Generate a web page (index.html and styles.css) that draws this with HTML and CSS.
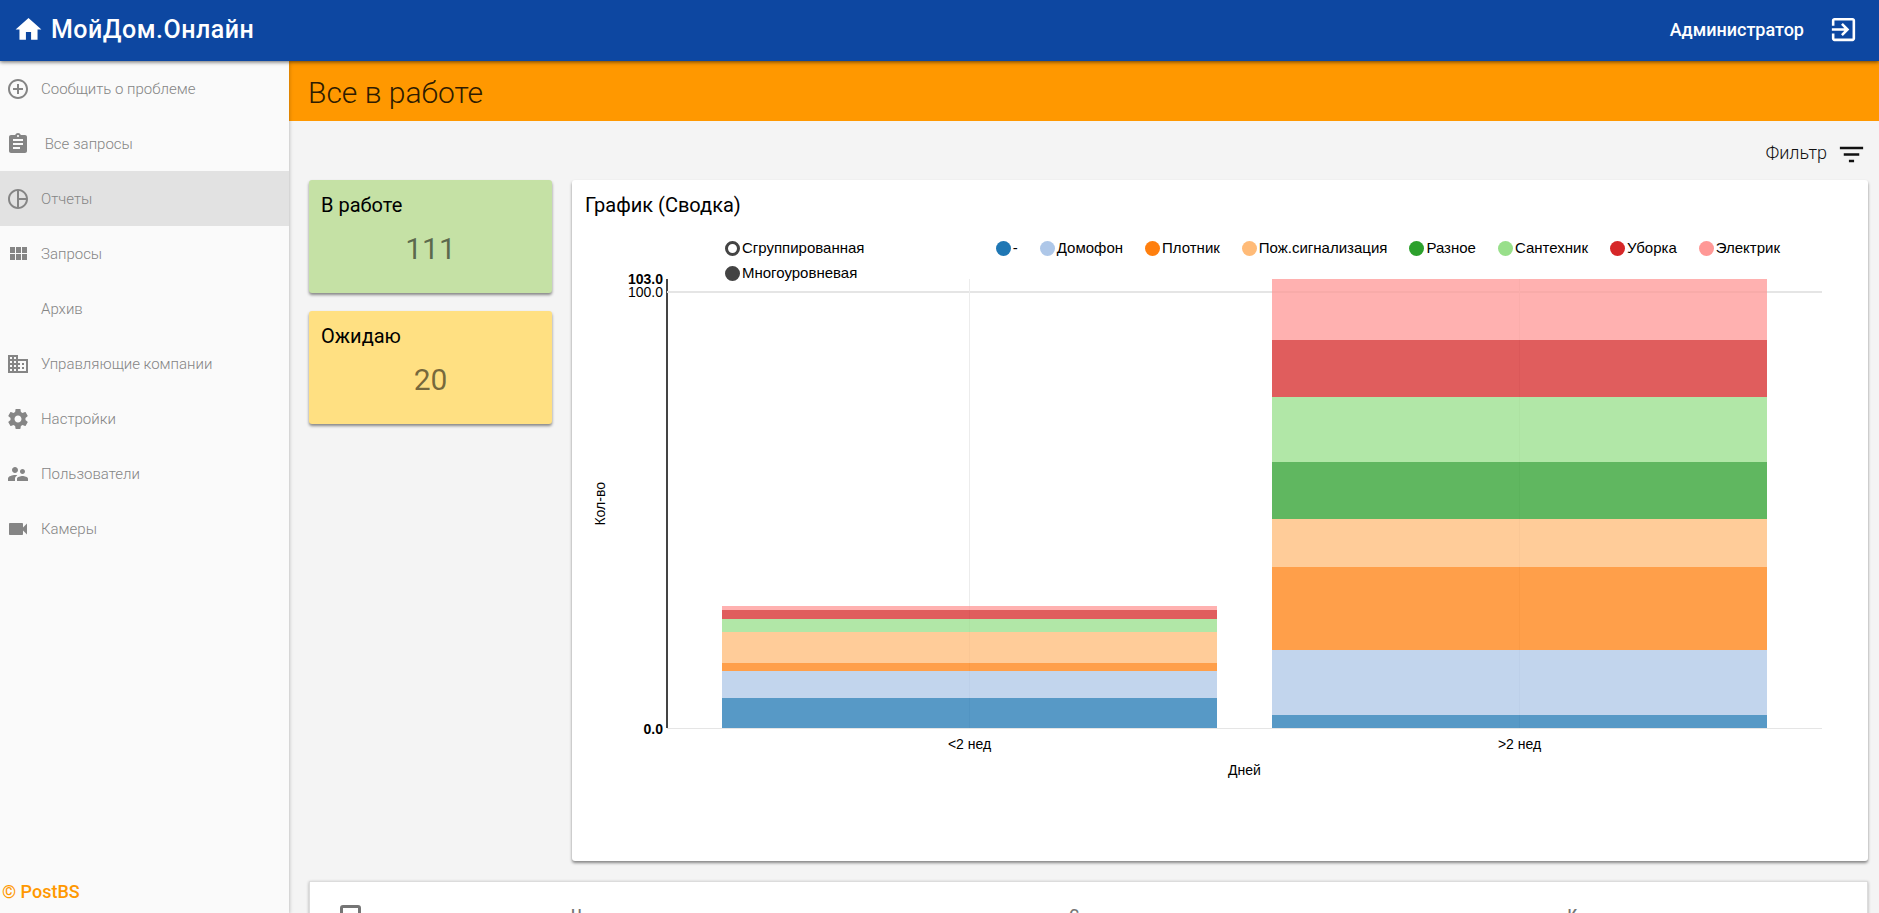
FILE: index.html
```html
<!DOCTYPE html>
<html lang="ru">
<head>
<meta charset="utf-8">
<title>МойДом.Онлайн</title>
<link rel="stylesheet" href="styles.css">
</head>
<body>
<header class="topbar">
  <a class="brand" href="#">
    <svg class="icon-lg" viewBox="0 0 24 24"><path d="M10 20v-6h4v6h5v-8h3L12 3 2 12h3v8z"/></svg>
    <span>МойДом.Онлайн</span>
  </a>
  <div class="account">
    <span>Администратор</span>
    <button class="icon-button" type="button" aria-label="Выйти">
      <svg class="icon-lg" viewBox="0 0 24 24"><path d="M10.09 15.59L11.5 17l5-5-5-5-1.41 1.41L12.67 11H3v2h9.67l-2.58 2.59zM19 3H5c-1.11 0-2 .9-2 2v4h2V5h14v14H5v-4H3v4c0 1.1.89 2 2 2h14c1.1 0 2-.9 2-2V5c0-1.1-.9-2-2-2z"/></svg>
    </button>
  </div>
</header>
<div class="layout">
  <nav class="sidebar">
    <ul class="menu">
      <li><a class="menu-item" href="#"><svg class="icon" viewBox="0 0 24 24"><path d="M13 7h-2v4H7v2h4v4h2v-4h4v-2h-4V7zm-1-5C6.48 2 2 6.48 2 12s4.48 10 10 10 10-4.48 10-10S17.52 2 12 2zm0 18c-4.41 0-8-3.59-8-8s3.59-8 8-8 8 3.59 8 8-3.59 8-8 8z"/></svg><span>Сообщить о проблеме</span></a></li>
      <li><a class="menu-item" href="#"><svg class="icon" viewBox="0 0 24 24"><path d="M19 3h-4.18C14.4 1.84 13.3 1 12 1c-1.3 0-2.4.84-2.82 2H5c-1.1 0-2 .9-2 2v14c0 1.1.9 2 2 2h14c1.1 0 2-.9 2-2V5c0-1.1-.9-2-2-2zm-7 0c.55 0 1 .45 1 1s-.45 1-1 1-1-.45-1-1 .45-1 1-1zm2 14H7v-2h7v2zm3-4H7v-2h10v2zm0-4H7V7h10v2z"/></svg><span>&nbsp;Все запросы</span></a></li>
      <li><a class="menu-item menu-item-active" href="#"><svg class="icon" viewBox="0 0 24 24"><path d="M12 2C6.48 2 2 6.48 2 12s4.48 10 10 10 10-4.48 10-10S17.52 2 12 2zm1 2.07c3.61.45 6.48 3.33 6.93 6.93H13V4.07zM4 12c0-4.06 3.07-7.44 7-7.93v15.87c-3.93-.5-7-3.88-7-7.94zm9 7.93V13h6.93c-.45 3.61-3.32 6.48-6.93 6.93z"/></svg><span>Отчеты</span></a></li>
      <li><a class="menu-item" href="#"><svg class="icon" viewBox="0 0 24 24"><path d="M4 11h5V5H4v6zm0 7h5v-6H4v6zm6 0h5v-6h-5v6zm6 0h5v-6h-5v6zm-6-7h5V5h-5v6zm6-6v6h5V5h-5z"/></svg><span>Запросы</span></a></li>
      <li><a class="menu-item" href="#"><span class="icon"></span><span>Архив</span></a></li>
      <li><a class="menu-item" href="#"><svg class="icon" viewBox="0 0 24 24"><path d="M12 7V3H2v18h20V7H12zM6 19H4v-2h2v2zm0-4H4v-2h2v2zm0-4H4V9h2v2zm0-4H4V5h2v2zm4 12H8v-2h2v2zm0-4H8v-2h2v2zm0-4H8V9h2v2zm0-4H8V5h2v2zm10 12h-8v-2h2v-2h-2v-2h2v-2h-2V9h8v10zm-2-8h-2v2h2v-2zm0 4h-2v2h2v-2z"/></svg><span>Управляющие компании</span></a></li>
      <li><a class="menu-item" href="#"><svg class="icon" viewBox="0 0 24 24"><path d="M19.43 12.98c.04-.32.07-.64.07-.98s-.03-.66-.07-.98l2.11-1.65c.19-.15.24-.42.12-.64l-2-3.46c-.12-.22-.39-.3-.61-.22l-2.49 1c-.52-.4-1.08-.73-1.69-.98l-.38-2.65C14.46 2.18 14.25 2 14 2h-4c-.25 0-.46.18-.49.42l-.38 2.65c-.61.25-1.17.59-1.69.98l-2.49-1c-.23-.09-.49 0-.61.22l-2 3.46c-.13.22-.07.49.12.64l2.11 1.65c-.04.32-.07.65-.07.98s.03.66.07.98l-2.11 1.65c-.19.15-.24.42-.12.64l2 3.46c.12.22.39.3.61.22l2.49-1c.52.4 1.08.73 1.69.98l.38 2.65c.03.24.24.42.49.42h4c.25 0 .46-.18.49-.42l.38-2.65c.61-.25 1.17-.59 1.69-.98l2.49 1c.23.09.49 0 .61-.22l2-3.46c.12-.22.07-.49-.12-.64l-2.11-1.65zM12 15.5c-1.93 0-3.5-1.57-3.5-3.5s1.57-3.5 3.5-3.5 3.5 1.57 3.5 3.5-1.57 3.5-3.5 3.5z"/></svg><span>Настройки</span></a></li>
      <li><a class="menu-item" href="#"><svg class="icon" viewBox="0 0 24 24"><path d="M16.5 12c1.38 0 2.49-1.12 2.49-2.5S17.88 7 16.5 7C15.12 7 14 8.12 14 9.5s1.12 2.5 2.5 2.5zM9 11c1.66 0 2.99-1.34 2.99-3S10.66 5 9 5C7.34 5 6 6.34 6 8s1.34 3 3 3zm7.5 3c-1.83 0-5.5.92-5.5 2.75V19h11v-2.25c0-1.83-3.67-2.75-5.5-2.75zM9 13c-2.33 0-7 1.17-7 3.5V19h7v-2.25c0-.85.33-2.34 2.37-3.47C10.5 13.1 9.66 13 9 13z"/></svg><span>Пользователи</span></a></li>
      <li><a class="menu-item" href="#"><svg class="icon" viewBox="0 0 24 24"><path d="M17 10.5V7c0-.55-.45-1-1-1H4c-.55 0-1 .45-1 1v10c0 .55.45 1 1 1h12c.55 0 1-.45 1-1v-3.5l4 4v-11l-4 4z"/></svg><span>Камеры</span></a></li>
    </ul>
    <a class="copyright" href="#">© PostBS</a>
  </nav>
  <main class="content">
    <h1 class="page-title">Все в работе</h1>
    <div class="filter-bar">
      <button class="filter-button" type="button">
        <span>Фильтр</span>
        <svg class="icon-lg" viewBox="0 0 24 24"><path d="M10 18h4v-2h-4v2zM3 6v2h18V6H3zm3 7h12v-2H6v2z"/></svg>
      </button>
    </div>
    <div class="dashboard">
      <div class="counters">
        <section class="card counter counter-green">
          <h2 class="card-title">В работе</h2>
          <p class="counter-value">111</p>
        </section>
        <section class="card counter counter-yellow">
          <h2 class="card-title">Ожидаю</h2>
          <p class="counter-value">20</p>
        </section>
      </div>
      <section class="card chart-card">
        <h2 class="card-title">График (Сводка)</h2>
        <div class="chart">
          <div class="chart-head">
            <div class="modes">
              <label class="key"><input class="mode" type="radio" name="mode">Сгруппированная</label>
              <label class="key"><input class="mode" type="radio" name="mode" checked>Многоуровневая</label>
            </div>
            <ul class="legend">
              <li class="key"><i class="dot c1"></i>-</li>
              <li class="key"><i class="dot c2"></i>Домофон</li>
              <li class="key"><i class="dot c3"></i>Плотник</li>
              <li class="key"><i class="dot c4"></i>Пож.сигнализация</li>
              <li class="key"><i class="dot c5"></i>Разное</li>
              <li class="key"><i class="dot c6"></i>Сантехник</li>
              <li class="key"><i class="dot c7"></i>Уборка</li>
              <li class="key"><i class="dot c8"></i>Электрик</li>
            </ul>
          </div>
          <div class="y-title"><span>Кол-во</span></div>
          <div class="y-axis">
            <b class="tick tick-max">103.0</b>
            <span class="tick tick-100">100.0</span>
            <b class="tick tick-min">0.0</b>
          </div>
          <div class="plot">
            <div class="gridline"></div>
            <div class="band">
              <div class="stack">
                <i class="c8" style="height:calc(100% * 1 / 103)"></i>
                <i class="c7" style="height:calc(100% * 2 / 103)"></i>
                <i class="c6" style="height:calc(100% * 3 / 103)"></i>
                <i class="c4" style="height:calc(100% * 7 / 103)"></i>
                <i class="c3" style="height:calc(100% * 2 / 103)"></i>
                <i class="c2" style="height:calc(100% * 6 / 103)"></i>
                <i class="c1" style="height:calc(100% * 7 / 103)"></i>
              </div>
            </div>
            <div class="band">
              <div class="stack">
                <i class="c8" style="height:calc(100% * 14 / 103)"></i>
                <i class="c7" style="height:calc(100% * 13 / 103)"></i>
                <i class="c6" style="height:calc(100% * 15 / 103)"></i>
                <i class="c5" style="height:calc(100% * 13 / 103)"></i>
                <i class="c4" style="height:calc(100% * 11 / 103)"></i>
                <i class="c3" style="height:calc(100% * 19 / 103)"></i>
                <i class="c2" style="height:calc(100% * 15 / 103)"></i>
                <i class="c1" style="height:calc(100% * 3 / 103)"></i>
              </div>
            </div>
          </div>
          <div class="x-axis"><span>&lt;2 нед</span><span>&gt;2 нед</span></div>
          <div class="x-title">Дней</div>
        </div>
      </section>
    </div>
    <section class="table-card">
      <table class="requests">
        <thead>
          <tr>
            <th class="check-cell"><input class="check" type="checkbox" aria-label="Выбрать все"></th>
            <th class="wide-cell">Н</th>
            <th class="wide-cell">С</th>
            <th>К</th>
          </tr>
        </thead>
      </table>
    </section>
  </main>
</div>
</body>
</html>
```
FILE: styles.css
```css
* { box-sizing: border-box; }

body {
  margin: 0;
  height: 100vh;
  display: flex;
  flex-direction: column;
  overflow: hidden;
  background: #f4f4f4;
  color: #000;
  font-family: Roboto, "Liberation Sans", sans-serif;
}

ul, p, h1, h2 { margin: 0; padding: 0; list-style: none; }
a { color: inherit; text-decoration: none; }
svg { display: block; fill: currentColor; }
button { padding: 0; border: 0; background: none; color: inherit; font: inherit; cursor: pointer; }

.icon { flex: none; width: 24px; height: 24px; }
.icon-lg { flex: none; width: 31px; height: 31px; }

.topbar {
  position: relative;
  z-index: 2;
  flex: none;
  display: flex;
  align-items: center;
  justify-content: space-between;
  height: 61px;
  padding: 0 20px 3px 13px;
  background: #0d47a1;
  color: #fff;
  box-shadow: 0 1px 4px rgba(0, 0, 0, .6);
}
.brand { display: flex; align-items: center; gap: 7px; font-size: 25px; font-weight: 500; line-height: 31px; letter-spacing: .5px; }
.account { display: flex; align-items: center; gap: 24px; font-size: 18px; font-weight: 500; }

.layout { flex: 1; min-height: 0; display: flex; }

.sidebar {
  position: relative;
  z-index: 1;
  flex: none;
  width: 289px;
  display: flex;
  flex-direction: column;
  justify-content: space-between;
  background: #fafafa;
  box-shadow: 0 1px 4px rgba(0, 0, 0, .3);
}
.menu-item {
  display: flex;
  align-items: center;
  gap: 11px;
  height: 55px;
  padding-left: 6px;
  color: #858585;
  font-size: 15px;
  font-weight: 300;
}
.menu-item-active { background: #e2e2e2; }
.copyright { padding: 0 2px 11px; color: #ff9800; font-size: 18px; font-weight: 500; line-height: 21px; }

.content { flex: 1; min-width: 0; overflow: hidden; }
.page-title {
  height: 60px;
  padding-left: 19px;
  background: #ff9800;
  color: #2e1b00;
  font-size: 30px;
  font-weight: 300;
  line-height: 64px;
}
.filter-bar { display: flex; justify-content: flex-end; align-items: flex-end; height: 59px; padding: 0 12px 10px; }
.filter-button { display: flex; align-items: flex-start; gap: 9px; font-size: 18px; font-weight: 300; line-height: 27px; color: #111; }

.dashboard { display: flex; gap: 20px; padding: 0 11px 0 20px; }
.counters { flex: none; width: 243px; display: flex; flex-direction: column; gap: 18px; }
.card { border-radius: 3px; box-shadow: 0 2px 3px rgba(0, 0, 0, .45); }
.card-title { font-size: 20px; font-weight: 400; line-height: 24px; }
.counter { height: 113px; padding: 13px 12px; }
.counter-green { background: #c5e1a5; }
.counter-yellow { background: #ffe082; }
.counter-value { padding-top: 12px; text-align: center; color: rgba(0, 0, 0, .54); font-size: 30px; line-height: 40px; }

.chart-card { flex: 1; min-width: 0; height: 681px; padding: 13px 46px 0 13px; background: #fff; }

.chart {
  display: grid;
  grid-template-columns: 30px 52px 1fr;
  grid-template-rows: 62px 450px 30px 22px;
  font-family: "Liberation Sans", Arial, sans-serif;
  font-size: 14px;
  line-height: 16px;
}
.chart-head {
  grid-column: 3;
  display: flex;
  align-items: flex-start;
  justify-content: space-between;
  padding: 23px 42px 0 58px;
  font-size: 15px;
}
.modes { display: grid; gap: 9px; }
.legend { display: flex; gap: 22px; }
.key { display: flex; align-items: center; gap: 2px; white-space: nowrap; }
.dot { width: 15px; height: 15px; border-radius: 50%; }
.mode { appearance: none; margin: 0; width: 15px; height: 15px; border: 3px solid #444; border-radius: 50%; }
.mode:checked { background: #444; }

.y-title { grid-area: 2 / 1; display: flex; align-items: center; justify-content: center; }
.y-title span { writing-mode: vertical-rl; transform: rotate(180deg); }
.y-axis { grid-area: 2 / 2; position: relative; }
.tick { position: absolute; right: 4px; transform: translateY(-50%); }
.tick-max { top: 0; }
.tick-100 { top: calc(100% * 3 / 103); }
.tick-min { top: 100%; }

.plot {
  grid-area: 2 / 3;
  position: relative;
  display: flex;
  padding: 0 calc(100% / 42);
  border-bottom: 1px solid #e5e5e5;
}
.plot::before { content: ""; position: absolute; left: -1px; top: 0; width: 2px; height: 100%; background: #444; }
.gridline { position: absolute; left: 0; right: 0; top: calc(100% * 3 / 103 - 1px); height: 2px; background: #e5e5e5; }
.band {
  position: relative;
  flex: 1;
  display: flex;
  align-items: flex-end;
  padding: 0 calc(100% / 40);
  background: linear-gradient(#ececec, #ececec) center / 1px 100% no-repeat;
}
.stack { flex: 1; height: 100%; display: flex; flex-direction: column; justify-content: flex-end; opacity: .75; }

.x-axis { grid-area: 3 / 3; display: flex; padding: 7px calc(100% / 42) 0; text-align: center; }
.x-axis span { flex: 1; }
.x-title { grid-area: 4 / 3; padding-top: 3px; text-align: center; }

.c1 { background: #1f77b4; }
.c2 { background: #aec7e8; }
.c3 { background: #ff7f0e; }
.c4 { background: #ffbb78; }
.c5 { background: #2ca02c; }
.c6 { background: #98df8a; }
.c7 { background: #d62728; }
.c8 { background: #ff9896; }

.table-card { margin: 20px 11px 0 20px; background: #fff; border: 1px solid #dcdcdc; box-shadow: 0 1px 3px rgba(0, 0, 0, .3); }
.requests { width: 100%; border-collapse: collapse; table-layout: fixed; }
.requests th { height: 66px; padding: 0; text-align: left; color: #757575; font-size: 15px; font-weight: 500; }
.requests .check-cell { width: 261px; padding-left: 30px; }
.requests .wide-cell { width: 32%; }
.check { appearance: none; display: block; margin: 0; width: 21px; height: 21px; border: 3px solid #757575; border-radius: 3px; }
```
